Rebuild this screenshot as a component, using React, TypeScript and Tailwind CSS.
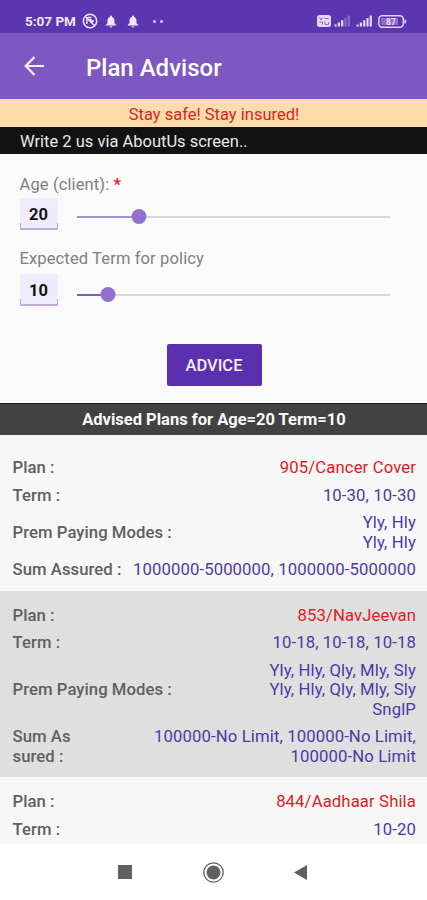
import { ReactNode } from 'react';

type Plan = {
  name: string;
  term: string;
  modes?: string[];
  sum?: string[];
  sumLabel?: string[];
};

const plans: Plan[] = [
  {
    name: '905/Cancer Cover',
    term: '10-30, 10-30',
    modes: ['Yly, Hly', 'Yly, Hly'],
    sum: ['1000000-5000000, 1000000-5000000'],
    sumLabel: ['Sum Assured :'],
  },
  {
    name: '853/NavJeevan',
    term: '10-18, 10-18, 10-18',
    modes: ['Yly, Hly, Qly, Mly, Sly', 'Yly, Hly, Qly, Mly, Sly', 'SnglP'],
    sum: ['100000-No Limit, 100000-No Limit,', '100000-No Limit'],
    sumLabel: ['Sum As', 'sured :'],
  },
  {
    name: '844/Aadhaar Shila',
    term: '10-20',
  },
];

function Bell() {
  return (
    <svg width="12" height="13" viewBox="0 0 12 13" fill="#eee6fb">
      <path d="M6 0.5a1 1 0 0 1 1 1v.4c1.7.5 2.5 1.900 2.500 3.700v2.600L11.300 10v.6H.7V10l1.800-1.800V5.600C2.500 3.800 3.300 2.400 5 1.900v-.4a1 1 0 0 1 1-1Z" />
      <path d="M4.700 11.200h2.600a1.300 1.300 0 0 1-2.600 0Z" />
    </svg>
  );
}

function Signal({ weak }: { weak?: boolean }) {
  return (
    <svg width="17" height="12" viewBox="0 0 17 12" fill="#e3d6f7">
      <rect x="0.500" y="9.500" width="2.200" height="2" />
      <rect x="3.800" y="7.500" width="2.200" height="4" />
      <rect x="7.100" y="5.200" width="2.200" height="6.300" />
      <rect x="10.400" y="3" width="2.200" height="8.500" opacity={weak ? 0.35 : 1} />
      <rect x="13.700" y="0.500" width="2.200" height="11" opacity={weak ? 0.35 : 1} />
    </svg>
  );
}

function StatusBar() {
  return (
    <div className="flex h-[33px] shrink-0 items-center bg-[#5c35b0] pt-[9px] pl-[25px] text-[#eee6fb]">
      <span className="w-[57px] text-[13.500px] leading-4 font-bold whitespace-nowrap">5:07 PM</span>
      <svg width="16" height="16" viewBox="0 0 16 16" fill="none" stroke="#eee6fb" strokeWidth="1.500">
        <circle cx="8" cy="8" r="6.700" />
        <path d="M4.800 11V7.300a3.200 3.200 0 0 1 4.600-2.700M11 7v2M3.800 4l8.400 8.200" />
        <path d="M7 6l3.600 3.500" strokeWidth="2.500" />
      </svg>
      <div className="ml-[7px] flex gap-[10px]">
        <Bell />
        <Bell />
      </div>
      <div className="ml-[14px] flex gap-[3.500px]">
        <i className="size-[3px] rounded-full bg-[#d9c9f3]" />
        <i className="size-[3px] rounded-full bg-[#d9c9f3]" />
      </div>
      <div className="mr-[20px] ml-auto flex items-center">
        <svg width="14" height="12" viewBox="0 0 14 12">
          <rect width="14" height="12" rx="2.500" fill="#e3d6f7" />
          <path d="M2.500 2.500l1.500 2.500 1.500-2.500M7.500 3.500h4M2.500 7h3v2.500M8 6.500v3h3.500V7" fill="none" stroke="#8f6ccb" strokeWidth="1" />
        </svg>
        <span className="ml-[3px]"><Signal weak /></span>
        <span className="ml-[5px]"><Signal /></span>
        <svg className="ml-[5px]" width="29" height="13" viewBox="0 0 29 13">
          <rect x="0.800" y="0.800" width="24.500" height="11.400" rx="3.500" fill="none" stroke="#e3d6f7" strokeWidth="1.500" />
          <rect x="3" y="3" width="17" height="7" rx="1" fill="#8f6ccb" />
          <path d="M26.500 4.300c1.300.2 1.800 1 1.800 2.200s-.5 2-1.800 2.200Z" fill="#e3d6f7" />
          <text x="13" y="9.600" fontSize="8.500" fontWeight="700" textAnchor="middle" fill="#e8dcf8">87</text>
        </svg>
      </div>
    </div>
  );
}

type SliderFieldProps = {
  label: ReactNode;
  value: number;
  percent: number;
  tone: string;
  gap: string;
  drop: string;
};

function SliderField({ label, value, percent, tone, gap, drop }: SliderFieldProps) {
  return (
    <div>
      <div className="h-[20px] text-[16.500px] leading-5 tracking-[0.130px] whitespace-nowrap text-[#808080]">{label}</div>
      <div className={`flex items-center ${gap}`}>
        <div className="flex h-[32px] w-[38px] flex-col bg-[#efedfd]">
          <span className="h-[25px] pt-[4px] text-center text-[16.500px] leading-[25px] font-bold text-[#111]">{value}</span>
          <span className="h-[7px] rounded-b-[1px] border-x border-b-2 border-[#c1abd8]" />
        </div>
        <div className={`relative ml-[19px] h-[15px] w-[313px] ${drop}`}>
          <div className="absolute top-[7px] h-[2px] w-full bg-[#d8d8d8]" />
          <div className={`absolute top-[7px] h-[2px] ${tone}`} style={{ width: `${percent}%` }} />
          <div className="absolute top-[0.500px] size-[15px] -translate-x-1/2 rounded-full bg-[#9270ce]" style={{ left: `${percent}%` }} />
        </div>
      </div>
    </div>
  );
}

function Row({ label, values, color = 'text-[#4d38a6]' }: { label: string[]; values: string[]; color?: string }) {
  return (
    <div className="flex items-center justify-between py-[4px] leading-[19.500px] whitespace-nowrap">
      <div className="tracking-[0.050px] font-medium text-[#606060]">
        {label.map((l) => <div key={l}>{l}</div>)}
      </div>
      <div className={`text-right tracking-[0.120px] ${color}`}>
        {values.map((v, i) => <div key={i}>{v}</div>)}
      </div>
    </div>
  );
}

function PlanCard({ plan, dark }: { plan: Plan; dark: boolean }) {
  return (
    <div className={`pt-[11px] pr-[11px] pb-[7px] pl-[12.500px] text-[16.700px] ${dark ? 'bg-[#dfdfdf]' : 'bg-[#f7f7f7]'}`}>
      <Row label={['Plan :']} values={[plan.name]} color="text-[#e3191f]" />
      <Row label={['Term :']} values={[plan.term]} />
      {plan.modes && <Row label={['Prem Paying Modes :']} values={plan.modes} />}
      {plan.sum && plan.sumLabel && <Row label={plan.sumLabel} values={plan.sum} />}
    </div>
  );
}

export default function App() {
  return (
    <div className="flex h-[900px] w-[427px] flex-col overflow-hidden bg-[#fafafa] font-[Roboto,sans-serif]">
      <StatusBar />
      <header className="flex h-[66px] shrink-0 items-center bg-[#7e57c1] pl-[24px] text-white">
        <svg width="21" height="20" viewBox="0 0 21 20" fill="none" stroke="#f5effd" strokeWidth="2.200">
          <path d="M20 10H2M10.500 1L1.700 10l8.800 9" />
        </svg>
        <h1 className="ml-[41px] pt-[3px] text-[24px] leading-7 font-medium">Plan Advisor</h1>
      </header>
      <div className="h-[28px] shrink-0 bg-[#fddcab] pt-[2px] pl-px text-center text-[16.500px] leading-[28px] text-[#df1f1c]">Stay safe! Stay insured!</div>
      <div className="h-[27px] shrink-0 bg-[#121212] pt-px pl-[20px] text-[16.500px] leading-[28px] text-[#e8e8e8]">Write 2 us via AboutUs screen..</div>

      <section className="flex h-[249px] shrink-0 flex-col pt-[21px] pl-[19.500px]">
        <SliderField label={<>Age (client): <b className="text-[#ed1c24]">*</b></>} value={20} percent={20} tone="bg-[#a78fd0]" gap="mt-[3px]" drop="top-[2px]" />
        <div className="h-[19px]" />
        <SliderField label="Expected Term for policy" value={10} percent={10} tone="bg-[#8059c2]" gap="mt-[5px]" drop="top-[4px]" />
        <button className="mt-[37.500px] ml-[147px] h-[42px] w-[95px] rounded-[2px] bg-[#5b2fae] pt-[3px] text-[16.500px] font-medium text-[#f5effc]">ADVICE</button>
      </section>

      <div className="h-[32px] shrink-0 border-t border-[#1c1c1c] bg-[#424242] pl-px text-center text-[16.500px] leading-[32px] font-bold text-[#fafafa]">
        Advised Plans for Age=20 Term=10
      </div>

      <main className="min-h-0 flex-1 overflow-hidden bg-[#f7f7f7] pt-[8px]">
        {plans.map((plan, i) => <PlanCard key={plan.name} plan={plan} dark={i % 2 === 1} />)}
      </main>

      <nav className="flex h-[56px] shrink-0 items-center bg-white pl-[118px]">
        <i className="size-[14px] bg-[#606060]" />
        <svg className="ml-[71px]" width="21" height="21" viewBox="0 0 21 21">
          <circle cx="10.500" cy="10.500" r="9.700" fill="none" stroke="#606060" strokeWidth="1.300" />
          <circle cx="10.500" cy="10.500" r="6.900" fill="#606060" />
        </svg>
        <svg className="ml-[70px]" width="13" height="15" viewBox="0 0 13 15">
          <path d="M13 0v15L0 7.500Z" fill="#606060" />
        </svg>
      </nav>
    </div>
  );
}
